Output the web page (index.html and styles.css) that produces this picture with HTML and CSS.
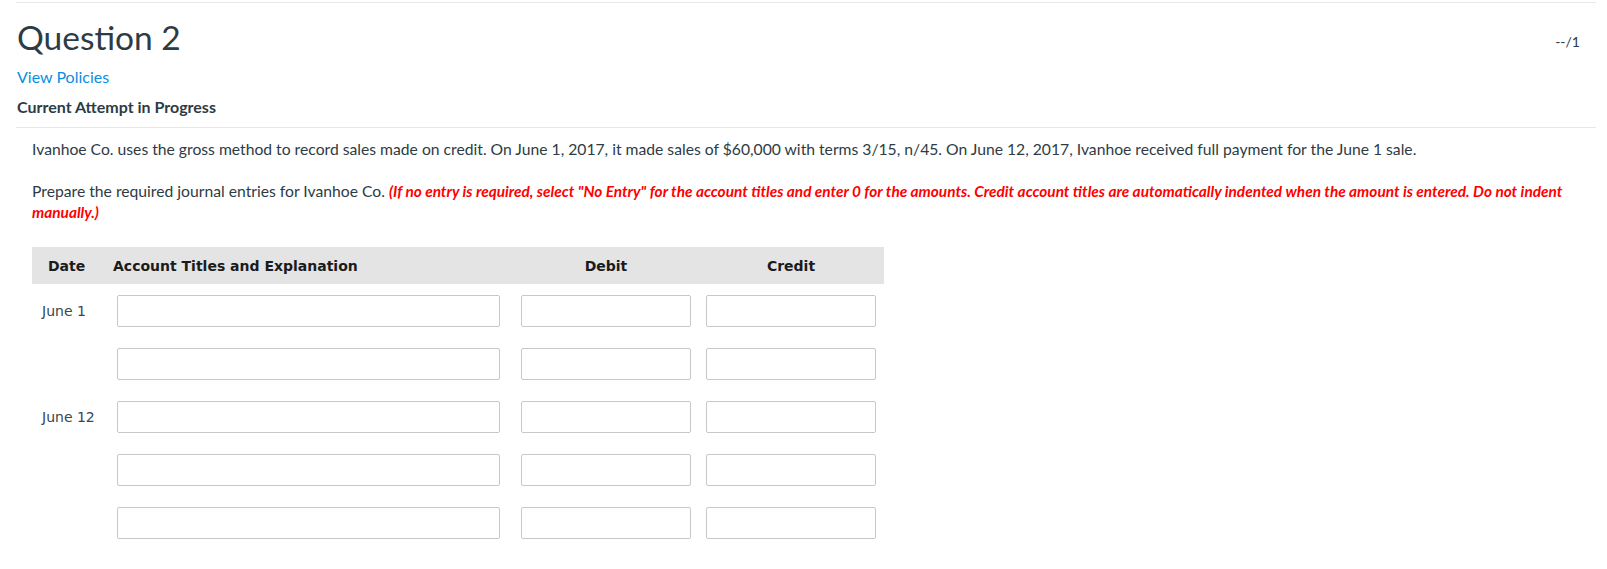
FILE: index.html
```html
<!DOCTYPE html>
<html>
<head>
<meta charset="utf-8">
<link rel="stylesheet" href="styles.css">
</head>
<body>
<div class="page">
  <div class="question-header">
    <div class="head-left">
      <h1 class="q-title">Question 2</h1>
      <a class="policies" href="#">View Policies</a>
      <div class="attempt">Current Attempt in Progress</div>
    </div>
    <div class="score">--/1</div>
  </div>
  <div class="question-body">
    <p class="stem">Ivanhoe Co. uses the gross method to record sales made on credit. On June 1, 2017, it made sales of $60,000 with terms 3/15, n/45. On June 12, 2017, Ivanhoe received full payment for the June 1 sale.</p>
    <p class="instr">Prepare the required journal entries for Ivanhoe Co. <span class="warn">(If no entry is required, select "No Entry" for the account titles and enter 0 for the amounts. Credit account titles are automatically indented when the amount is entered. Do not indent manually.)</span></p>

    <div class="journal">
      <div class="jhead">
        <div class="h-date">Date</div>
        <div class="h-acct">Account Titles and Explanation</div>
        <div class="h-amt">Debit</div>
        <div class="h-amt">Credit</div>
      </div>
      <div class="jrow">
        <div class="date">June 1</div>
        <div class="acct"><input type="text"></div>
        <div class="amt"><input type="text"></div>
        <div class="amt"><input type="text"></div>
      </div>
      <div class="jrow">
        <div class="date"></div>
        <div class="acct"><input type="text"></div>
        <div class="amt"><input type="text"></div>
        <div class="amt"><input type="text"></div>
      </div>
      <div class="jrow">
        <div class="date">June 12</div>
        <div class="acct"><input type="text"></div>
        <div class="amt"><input type="text"></div>
        <div class="amt"><input type="text"></div>
      </div>
      <div class="jrow">
        <div class="date"></div>
        <div class="acct"><input type="text"></div>
        <div class="amt"><input type="text"></div>
        <div class="amt"><input type="text"></div>
      </div>
      <div class="jrow">
        <div class="date"></div>
        <div class="acct"><input type="text"></div>
        <div class="amt"><input type="text"></div>
        <div class="amt"><input type="text"></div>
      </div>
    </div>
  </div>
</div>
</body>
</html>
```

FILE: styles.css
```css
html, body {
  margin: 0;
  padding: 0;
  background: #ffffff;
}
body {
  font-family: Lato, "Open Sans", sans-serif;
  color: #2d3b45;
  font-size: 15.7px;
}
.page {
  margin: 0 11px 0 16px;
  padding-top: 2px;
}
.question-header {
  border-top: 1px solid #e8e8e8;
  border-bottom: 1px solid #e8e8e8;
  display: flex;
  justify-content: space-between;
  align-items: flex-start;
  padding: 13px 16px 10px 1px;
}
.head-left {
  display: flex;
  flex-direction: column;
  align-items: flex-start;
}
.q-title {
  margin: 0;
  font-size: 33.5px;
  font-weight: 400;
  line-height: 43px;
  color: #2d3b45;
}
.policies {
  margin-top: 8px;
  font-size: 16px;
  line-height: 20px;
  color: #0a8ee2;
  text-decoration: none;
}
.attempt {
  margin-top: 10px;
  font-size: 16px;
  line-height: 20px;
  font-weight: 700;
  color: #2d3b45;
}
.score {
  margin-top: 16px;
  font-size: 14px;
  line-height: 20px;
  color: #2d3b45;
}
.question-body {
  padding: 0 0 0 16px;
}
.stem {
  margin: 11px 0 0 0;
  line-height: 21px;
}
.instr {
  margin: 21px 0 0 0;
  line-height: 21px;
}
.warn {
  color: #ff0000;
  font-weight: 700;
  font-style: italic;
  font-size: 15.4px;
  line-height: 21px;
}
.journal {
  margin-top: 24px;
  width: 852px;
  font-family: "DejaVu Sans", Verdana, sans-serif;
}
.jhead {
  display: grid;
  grid-template-columns: 81px 408px 185px 176px;
  background: #e4e4e4;
  height: 37px;
  align-items: center;
  font-weight: 700;
  font-size: 14px;
  color: #1b1b1b;
}
.h-date {
  padding-left: 16px;
}
.h-amt {
  width: 170px;
  text-align: center;
}
.jrow {
  display: grid;
  grid-template-columns: 81px 408px 185px 176px;
  align-items: center;
  margin-top: 11px;
}
.jrow + .jrow {
  margin-top: 21px;
}
.date {
  padding-left: 10px;
  font-size: 14px;
  color: #3a4650;
}
.acct input {
  margin-left: 4px;
  width: 383px;
}
.amt input {
  width: 170px;
}
input {
  box-sizing: border-box;
  height: 32px;
  border: 1px solid #c8c8c8;
  border-radius: 2px;
  margin: 0;
  padding: 0 6px;
  background: #fff;
  display: block;
}
```
